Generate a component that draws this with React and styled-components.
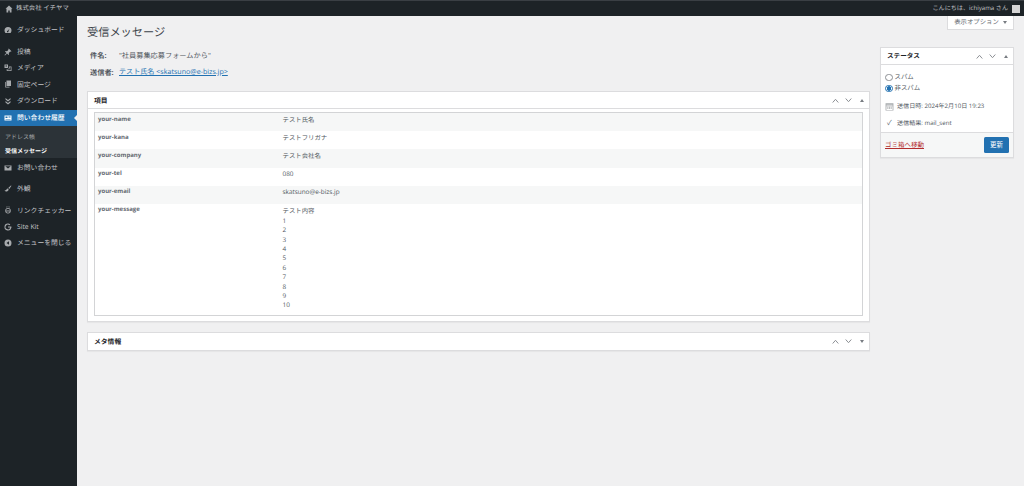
import styled, { createGlobalStyle } from 'styled-components'

const GlobalStyle = createGlobalStyle`
  html, body { margin: 0; padding: 0; height: 100%; background: #f0f0f1; }
  body {
    font-family: "Open Sans", "Noto Sans CJK JP", sans-serif;
    font-size: 6.4px;
    line-height: 1.4;
    color: #50575e;
    overflow: hidden;
    text-rendering: geometricPrecision;
  }
`

//#region Styled components
const Page = styled.div`
  width: 1024px;
  height: 486px;
  display: flex;
  flex-direction: column;
  overflow: hidden;
`
const AdminBar = styled.header`
  height: 16px;
  flex: none;
  box-sizing: border-box;
  border-top: 1px solid #3a3f44;
  background: #1d2327;
  color: #c3c4c7;
  display: flex;
  align-items: center;
  justify-content: space-between;
  padding: 0 4px 0 5px;
`
const SiteName = styled.div`
  display: flex;
  align-items: center;
  gap: 3px;
`
const Howdy = styled.div`
  display: flex;
  align-items: center;
  gap: 4px;
  font-size: 6.100px;
`
const Avatar = styled.span`
  width: 8px;
  height: 8px;
  background: #d5d5d5;
`
const Body = styled.div`
  flex: 1;
  display: flex;
  min-height: 0;
`
const Sidebar = styled.nav`
  width: 77px;
  flex: none;
  background: #1d2327;
  color: #c3c4c7;
  font-size: 6.8px;
  padding-top: 6px;
`
const MenuItem = styled.div`
  height: 16.4px;
  margin-bottom: ${({ $gap }) => $gap || 0}px;
  padding-left: 4px;
  display: flex;
  align-items: center;
  gap: 5px;
  position: relative;
  white-space: nowrap;
  background: ${({ $active }) => ($active ? '#2271b1' : 'transparent')};
  color: ${({ $active }) => ($active ? '#fff' : '#c3c4c7')};
  font-weight: ${({ $active }) => ($active ? 500 : 400)};
  ${({ $active }) => $active && `
    &::after {
      content: '';
      position: absolute;
      right: 0;
      top: 5px;
      border: 3px solid transparent;
      border-right-color: #f0f0f1;
      border-left: 0;
    }
  `}
`
const SubMenu = styled.div`
  background: #2c3338;
  padding: 3.500px 0 1.500px 5px;
  margin-bottom: 1px;
  height: 27px;
`
const SubItem = styled.div`
  font-size: 6px;
  height: 14px;
  line-height: 14px;
  color: ${({ $current }) => ($current ? '#fff' : '#a7aaad')};
  font-weight: ${({ $current }) => ($current ? 700 : 400)};
`
const Icon = styled.svg`
  width: ${({ $size }) => $size || 8}px;
  height: ${({ $size }) => $size || 8}px;
  flex: none;
  fill: ${({ $light }) => ($light ? '#fff' : '#a7aaad')};
`
const Main = styled.main`
  flex: 1;
  min-width: 0;
  padding: 0 10px 0 10px;
  position: relative;
`
const ScreenTab = styled.div`
  position: absolute;
  top: 0;
  right: 10px;
  width: 67px;
  height: 14px;
  box-sizing: border-box;
  background: #fff;
  border: 1px solid #dcdcde;
  border-top: 0;
  color: #646970;
  display: flex;
  align-items: center;
  justify-content: center;
  gap: 2px;
`
const Heading = styled.h1`
  margin: 0;
  padding-top: 8.500px;
  height: 23.500px;
  box-sizing: content-box;
  font-size: 11.2px;
  line-height: 16px;
  font-weight: 400;
  color: #3c434a;
`
const Columns = styled.div`
  display: flex;
  gap: 10px;
`
const Left = styled.div`
  width: 783px;
  flex: none;
`
const Right = styled.aside`
  width: 134px;
  flex: none;
  margin-top: -1px;
`
const InfoRow = styled.div`
  height: 16.500px;
  display: flex;
  align-items: center;
  padding-left: 3px;
  font-size: 7.2px;
`
const InfoLabel = styled.strong`
  width: ${({ $w }) => $w}px;
  flex: none;
  font-weight: 700;
`
const MailLink = styled.a`
  color: #2271b1;
  text-decoration: underline;
  font-size: 7.100px;
`
const Box = styled.section`
  background: #fff;
  border: 1px solid #dcdcde;
  box-sizing: border-box;
  box-shadow: 0 1px 1px rgba(0, 0, 0, 0.04);
  margin-top: ${({ $mt }) => $mt || 0}px;
`
const BoxHead = styled.div`
  height: 17px;
  display: flex;
  align-items: center;
  justify-content: space-between;
  padding: 0 5px 0 6px;
  border-bottom: ${({ $open }) => ($open ? '1px solid #dcdcde' : '0')};
  font-weight: 700;
  font-size: ${({ $size }) => $size || 6.800}px;
  color: #1d2327;
  box-sizing: border-box;
`
const BoxTitle = styled.span`
  padding-top: ${({ $pt }) => $pt || 0}px;
`
const Handles = styled.div`
  display: flex;
  align-items: center;
  gap: 5.500px;
`
const Arrow = styled.svg`
  width: 7px;
  height: 5px;
  fill: none;
  stroke: #8c8f94;
  stroke-width: 1;
`
const Caret = styled.span`
  width: 0;
  height: 0;
  margin-left: ${({ $ml }) => $ml || 0}px;
  border-left: 2px solid transparent;
  border-right: 2px solid transparent;
  border-${({ $down }) => ($down ? 'top' : 'bottom')}: 3px solid #787c82;
`
const TableWrap = styled.div`
  margin: 3px 6px 5px 6px;
  border: 1px solid #d3d4d6;
`
const FieldRow = styled.div`
  display: flex;
  padding: 0 0 0 3px;
  min-height: 18.200px;
  box-sizing: border-box;
  background: ${({ $odd }) => ($odd ? '#f6f7f7' : '#fff')};
`
const FieldKey = styled.strong`
  width: 184.500px;
  flex: none;
  padding-top: 1.500px;
  font-size: 6px;
  font-weight: 700;
  color: #646970;
`
const FieldValue = styled.div`
  padding: 2.500px 0 5px;
  color: #50575e;
`
const MessageLine = styled.div`
  height: 9.400px;
  line-height: 9.400px;
`
const StatusBody = styled.div`
  padding: 7px 5px 0 4px;
`
const RadioRow = styled.label`
  display: flex;
  align-items: center;
  gap: 2px;
  height: 11px;
  color: #50575e;
`
const Radio = styled.span`
  width: 7.500px;
  height: 7.500px;
  box-sizing: border-box;
  border-radius: 50%;
  border: 1px solid ${({ $on }) => ($on ? '#2271b1' : '#8c8f94')};
  background: ${({ $on }) => ($on ? 'radial-gradient(circle, #2271b1 0 2px, #fff 2.500px)' : '#fff')};
`
const StatusRow = styled.div`
  display: flex;
  align-items: center;
  gap: 3px;
  height: 17px;
  margin-top: ${({ $mt }) => $mt || 0}px;
  white-space: nowrap;
  font-size: 6.100px;
`
const Check = styled.span`
  width: 9px;
  padding-left: 2px;
  box-sizing: border-box;
  color: #50575e;
  font-size: 7px;
`
const StatusFooter = styled.div`
  height: 25px;
  background: #f6f7f7;
  border-top: 1px solid #dcdcde;
  box-sizing: border-box;
  display: flex;
  align-items: center;
  justify-content: space-between;
  padding: 0 4px;
`
const TrashLink = styled.a`
  color: #b32d2e;
  text-decoration: underline;
  font-size: 6.500px;
`
const UpdateButton = styled.button`
  width: 25px;
  height: 16px;
  padding: 0;
  background: #2271b1;
  color: #fff;
  border: 0;
  border-radius: 1.500px;
  font: inherit;
`
// #endregion

const paths = {
  home: 'M8 1 1 7.500h2V15h3.500v-4h3v4H13V7.500h2z',
  dash: 'M8 2a7 7 0 0 0-7 7c0 1.800.7 3.500 1.800 4.800h10.400A7 7 0 0 0 15 9a7 7 0 0 0-7-7zm.8 8.500a1.500 1.500 0 1 1-1.400-.9L11 5.500z',
  pin: 'M9.500 1 15 6.500l-1.500 1-1-.5-3 3 .5 3L9 14 6 11l-4 4-1-1 4-4-3-3 1-1 3 .5 3-3-.5-1z',
  media: 'M1 1h7v7H1zm2 2v2h3V3zM9.500 5H15v9H5.500v-4H7v2.500h6.500V6.500h-4zM10 8.500a1.200 1.200 0 1 0 1 1.200V8h1V7h-2z',
  page: 'M5 1h9v11H5zM2.500 4H4v9.500h7V15H2.500z',
  down: 'M3 2l5 4 5-4v3L8 9 3 5zm0 6 5 4 5-4v3l-5 4-5-4z',
  form: 'M1 3h14v10H1zm2 2v3h4V5zm6 0v1h4V5zm0 2v1h4V7zM3 10v1h10v-1z',
  mail: 'M1 3h14v10H1zm1.500 1.500L8 9l5.500-4.500z',
  brush: 'M15 1.500 13.800.8 8.500 6 10.500 8zM7.500 7C5 7.500 5 10 3 10.500 2 10.800 1.500 11 1 11.500c2 2 6.500 2.500 8.500-2z',
  link: 'M4.500 1h1v2h-1zm6 0h1v2h-1zM7.500 0h1v3h-1zM8 4a5.500 5.500 0 1 1 0 11A5.500 5.500 0 0 1 8 4zm0 1.500a4 4 0 1 0 0 8 4 4 0 0 0 0-8zM3.500 8h9v1h-9zM6 10a1 1 0 1 0 0 2 1 1 0 0 0 0-2zm4 0a1 1 0 1 0 0 2 1 1 0 0 0 0-2z',
  google: 'M8 1a7 7 0 1 0 6.800 8.500V7H8v2.200h4.300A4.600 4.600 0 1 1 11 4.700l1.600-1.600A7 7 0 0 0 8 1z',
  collapse: 'M8 1a7 7 0 1 0 0 14A7 7 0 0 0 8 1zm2 3.500v7L5 8z',
  calendar: 'M1 2h14v13H1zm1.500 3v1h11V5zm0 2.500V14h11V7.500zM4 8.500h2v1.500H4zm3 0h2v1.500H7zm3 0h2v1.500h-2zm-6 2.500h2v1.500H4zm3 0h2v1.500H7zm3 0h2v1.500h-2z',
}

const Glyph = ({ name, light, size }) => (
  <Icon viewBox="0 0 16 16" $light={ light } $size={ size }><path d={ paths[name] } /></Icon>
)

const BoxHandles = ({ down }) => (
  <Handles>
    <Arrow viewBox="0 0 7 5"><path d="M.7 4.500 3.500 1.300 6.300 4.500" /></Arrow>
    <Arrow viewBox="0 0 7 5"><path d="M.7 .5 3.500 3.700 6.300 .5" /></Arrow>
    <Caret $down={ down } $ml={ 3 } />
  </Handles>
)

const menu = [
  { icon: 'pin', label: '投稿' },
  { icon: 'media', label: 'メディア' },
  { icon: 'page', label: '固定ページ' },
  { icon: 'down', label: 'ダウンロード', gap: 1 },
]

const fields = [
  ['your-name', 'テスト氏名'],
  ['your-kana', 'テストフリガナ'],
  ['your-company', 'テスト会社名'],
  ['your-tel', '080'],
  ['your-email', 'skatsuno@e-bizs.jp'],
]

const messageLines = ['テスト内容', '1', '2', '3', '4', '5', '6', '7', '8', '9', '10']

const App = function () {
  return (
    <Page>
      <GlobalStyle />
      <AdminBar>
        <SiteName><Glyph name="home" />株式会社 イチヤマ</SiteName>
        <Howdy>こんにちは、ichiyama さん<Avatar /></Howdy>
      </AdminBar>
      <Body>
        <Sidebar>
          <MenuItem $gap={ 5 }><Glyph name="dash" />ダッシュボード</MenuItem>
          { menu.map((item) => (
            <MenuItem key={ item.label } $gap={ item.gap }>
              <Glyph name={ item.icon } />{ item.label }
            </MenuItem>
          )) }
          <MenuItem $active><Glyph name="form" light />問い合わせ履歴</MenuItem>
          <SubMenu>
            <SubItem>アドレス帳</SubItem>
            <SubItem $current>受信メッセージ</SubItem>
          </SubMenu>
          <MenuItem $gap={ 5 }><Glyph name="mail" />お問い合わせ</MenuItem>
          <MenuItem $gap={ 5 }><Glyph name="brush" />外観</MenuItem>
          <MenuItem><Glyph name="link" />リンクチェッカー</MenuItem>
          <MenuItem><Glyph name="google" />Site Kit</MenuItem>
          <MenuItem><Glyph name="collapse" />メニューを閉じる</MenuItem>
        </Sidebar>
        <Main>
          <ScreenTab>表示オプション <Caret $down $ml={ 2 } /></ScreenTab>
          <Heading>受信メッセージ</Heading>
          <Columns>
            <Left>
              <InfoRow><InfoLabel $w={ 29 }>件名:</InfoLabel>"社員募集応募フォームから"</InfoRow>
              <InfoRow>
                <InfoLabel $w={ 29 }>送信者:</InfoLabel>
                <MailLink>テスト氏名 &lt;skatsuno@e-bizs.jp&gt;</MailLink>
              </InfoRow>
              <Box $mt={ 10 }>
                <BoxHead $open><BoxTitle $pt={ 2 }>項目</BoxTitle><BoxHandles /></BoxHead>
                <TableWrap>
                  { fields.map(([key, value], i) => (
                    <FieldRow key={ key } $odd={ i % 2 === 0 }>
                      <FieldKey>{ key }</FieldKey>
                      <FieldValue>{ value }</FieldValue>
                    </FieldRow>
                  )) }
                  <FieldRow>
                    <FieldKey>your-message</FieldKey>
                    <FieldValue>
                      { messageLines.map((line) => <MessageLine key={ line }>{ line }</MessageLine>) }
                    </FieldValue>
                  </FieldRow>
                </TableWrap>
              </Box>
              <Box $mt={ 10 }>
                <BoxHead><BoxTitle $pt={ 2 }>メタ情報</BoxTitle><BoxHandles down /></BoxHead>
              </Box>
            </Left>
            <Right>
              <Box>
                <BoxHead $open $size={ 6.600 }><BoxTitle>ステータス</BoxTitle><BoxHandles /></BoxHead>
                <StatusBody>
                  <RadioRow><Radio />スパム</RadioRow>
                  <RadioRow><Radio $on />非スパム</RadioRow>
                  <StatusRow $mt={ 4 }><Glyph name="calendar" size={ 9 } />送信日時: 2024年2月10日 19:23</StatusRow>
                  <StatusRow><Check>✓</Check>送信結果: mail_sent</StatusRow>
                </StatusBody>
                <StatusFooter>
                  <TrashLink>ゴミ箱へ移動</TrashLink>
                  <UpdateButton>更新</UpdateButton>
                </StatusFooter>
              </Box>
            </Right>
          </Columns>
        </Main>
      </Body>
    </Page>
  )
}

export default App
